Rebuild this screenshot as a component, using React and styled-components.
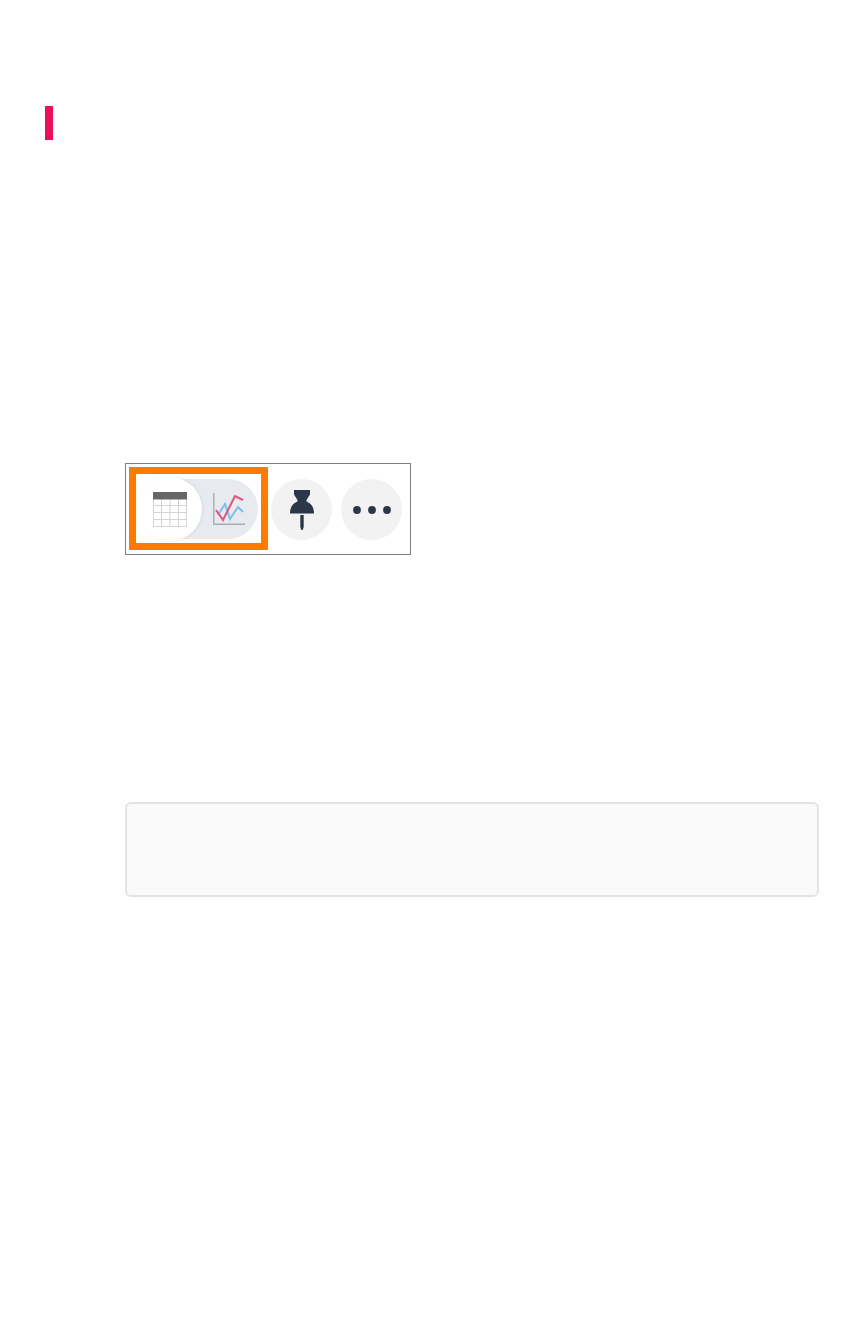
import React from "react";
import styled, { createGlobalStyle } from "styled-components";

const Global = createGlobalStyle`
  html, body { margin: 0; padding: 0; background: #fff; }
  body { font-family: "Open Sans", "Liberation Sans", sans-serif; }
`;

const Page = styled.div`
  width: 864px;
  height: 1344px;
  box-sizing: border-box;
  padding: 106px 45px 0;
  overflow: hidden;
`;

const AccentBar = styled.div`
  width: 8px;
  height: 34px;
  background: #ec1059;
`;

const Content = styled.div`
  margin: 323px 0 0 80px;
  display: flex;
  flex-direction: column;
  align-items: flex-start;
`;

const Frame = styled.div`
  width: 286px;
  height: 92px;
  box-sizing: border-box;
  border: 1px solid #7e7e7e;
  padding: 3px;
  display: flex;
  align-items: flex-start;
  background: #fff;
  filter: blur(0.7px);
`;

const Highlight = styled.div`
  width: 139px;
  height: 83px;
  box-sizing: border-box;
  border: 7px solid #ff7b00;
  display: flex;
  align-items: center;
  padding-left: 3px;
  flex: none;
`;

const Toggle = styled.div`
  width: 119px;
  height: 60px;
  margin-top: 1px;
  border-radius: 30px;
  background: #e7eaef;
  display: flex;
  align-items: center;
`;

const Knob = styled.div`
  width: 64px;
  height: 64px;
  margin-left: -1px;
  flex: none;
  border-radius: 50%;
  background: #fff;
  box-shadow: 1px 0 3px rgba(120, 130, 150, 0.14);
  display: flex;
  align-items: center;
  justify-content: center;
`;

const ChartSlot = styled.div`
  flex: none;
  margin-left: 11px;
  display: flex;
`;

const RoundButton = styled.div`
  width: 61px;
  height: 61px;
  border-radius: 50%;
  background: #f2f2f3;
  flex: none;
  margin: 12px 0 0 ${(p) => p.$gap}px;
  display: flex;
  align-items: center;
  justify-content: center;
`;

const Callout = styled.div`
  margin-top: 247px;
  width: 694px;
  height: 95px;
  box-sizing: border-box;
  background: #fafafa;
  border: 2px solid #e4e4e4;
  border-radius: 6px;
  filter: blur(0.4px);
`;

const TableIcon = () => (
  <svg width="34" height="35" viewBox="0 0 34 35">
    <g stroke="#d4d4d4" strokeWidth="1" fill="none">
      <path d="M.5 7v28M8.500 7v28M17 7v28M25.500 7v28M33.500 7v28" />
      <path d="M0 13.500h34M0 20.500h34M0 27.500h34M0 34.500h34" />
    </g>
    <rect x="0" y="0" width="34" height="7.500" fill="#666" />
  </svg>
);

const ChartIcon = () => (
  <svg width="32" height="32" viewBox="0 0 32 32" fill="none">
    <path d="M.8 0v31.200H32" stroke="#a9acb2" strokeWidth="1.400" />
    <path d="M5 22 12 11 17 26 25 14 30 19" stroke="#7cc0ee" strokeWidth="2" />
    <path d="M3 17 10 27 22 3 30 7" stroke="#e0557b" strokeWidth="2" />
  </svg>
);

const PinIcon = () => (
  <svg width="24" height="40" viewBox="0 0 24 40">
    <path
      d="M4 0h16v4.500l-3.500 5.500v1.500c4 1.500 7.500 5 7.500 12H0c0-7 3.500-10.500 7.500-12V10L4 4.500z"
      fill="#2b3648"
    />
    <path d="M10.300 25h3.400v12l-1 3h-1.400l-1-3z" fill="#2b3648" />
  </svg>
);

const DotsIcon = () => (
  <svg width="38" height="8" viewBox="0 0 38 8">
    <g fill="#2b3648">
      <circle cx="4" cy="4" r="3.900" />
      <circle cx="19" cy="4" r="3.900" />
      <circle cx="34" cy="4" r="3.900" />
    </g>
  </svg>
);

export default function App() {
  return (
    <Page>
      <Global />
      <AccentBar />
      <Content>
        <Frame>
          <Highlight>
            <Toggle>
              <Knob>
                <TableIcon />
              </Knob>
              <ChartSlot>
                <ChartIcon />
              </ChartSlot>
            </Toggle>
          </Highlight>
          <RoundButton $gap={3}>
            <PinIcon />
          </RoundButton>
          <RoundButton $gap={9}>
            <DotsIcon />
          </RoundButton>
        </Frame>
        <Callout />
      </Content>
    </Page>
  );
}
